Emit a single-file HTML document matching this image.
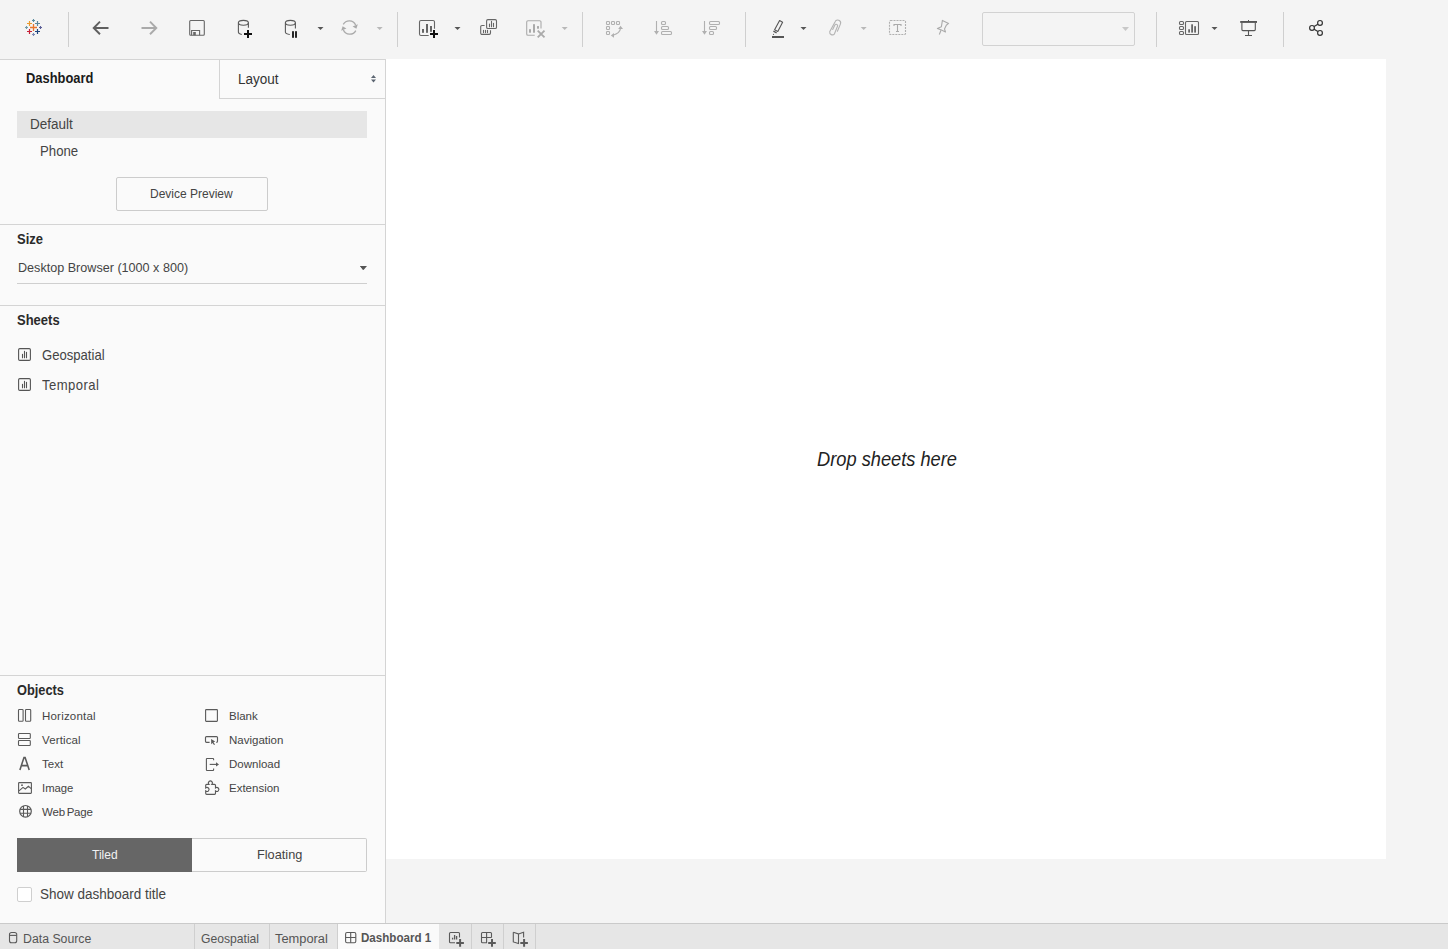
<!DOCTYPE html>
<html><head><meta charset="utf-8">
<style>
*{margin:0;padding:0;box-sizing:border-box}
html,body{width:1448px;height:949px;overflow:hidden}
body{position:relative;background:#f4f4f4;font-family:"Liberation Sans",sans-serif;color:#333}
.a{position:absolute}
.t{position:absolute;white-space:nowrap;line-height:1;transform-origin:0 0}
.sep{position:absolute;top:12px;width:1px;height:35px;background:#cfcfcf}
.dd{position:absolute;width:0;height:0;border-left:3px solid transparent;border-right:3px solid transparent;border-top:3px solid #555}
svg.i{position:absolute;overflow:visible}
</style></head><body>

<!-- TOOLBAR -->
<div id="toolbar" class="a" style="left:0;top:0;width:1448px;height:59px;background:#f4f4f4"></div>
<div class="sep" style="left:68px"></div>
<div class="sep" style="left:397px"></div>
<div class="sep" style="left:582px"></div>
<div class="sep" style="left:745px"></div>
<div class="sep" style="left:1156px"></div>
<div class="sep" style="left:1283px"></div>
<div class="a" style="left:982px;top:12px;width:153px;height:34px;border:1px solid #d2d2d2;border-radius:2px"></div>

<!-- CANVAS -->
<div class="a" style="left:386px;top:59px;width:1000px;height:800px;background:#fff"></div>
<div class="t" style="left:817px;top:450px;font-size:18.25px;font-style:italic;color:#222;transform:scaleY(1.07)">Drop sheets here</div>

<!-- SIDEBAR -->
<div class="a" style="left:0;top:59px;width:386px;height:865px;background:#fafafa;border-top:1px solid #d4d4d4;border-right:1px solid #d4d4d4"></div>
<div class="a" style="left:219px;top:59px;width:167px;height:40px;border-left:1px solid #d4d4d4;border-bottom:1px solid #d4d4d4;border-top:1px solid #d4d4d4;border-right:1px solid #d4d4d4"></div>
<div class="t" style="left:26px;top:72px;font-size:12.9px;font-weight:bold;color:#1a1a1a;transform:scaleY(1.11)">Dashboard</div>
<div class="t" style="left:238px;top:72px;font-size:13.5px;color:#333;transform:scaleY(1.11)">Layout</div>

<div class="a" style="left:17px;top:111px;width:350px;height:27px;background:#e6e6e6"></div>
<div class="t" style="left:30px;top:117px;font-size:13.5px;color:#444;transform:scaleY(1.11)">Default</div>
<div class="t" style="left:40px;top:144px;font-size:13.2px;color:#444;transform:scaleY(1.11)">Phone</div>
<div class="a" style="left:116px;top:177px;width:152px;height:34px;border:1px solid #cccccc;border-radius:2px"></div>
<div class="t" style="left:150px;top:188px;font-size:12px;color:#444">Device Preview</div>

<div class="a" style="left:0;top:224px;width:385px;height:1px;background:#d4d4d4"></div>
<div class="t" style="left:17px;top:232px;font-size:13px;font-weight:bold;color:#2b2b2b;transform:scaleY(1.11)">Size</div>
<div class="t" style="left:18px;top:262px;font-size:12.6px;color:#444">Desktop Browser (1000 x 800)</div>
<div class="dd" style="left:360px;top:266px;border-left-width:3.5px;border-right-width:3.5px;border-top-width:4px"></div>
<div class="a" style="left:17px;top:283px;width:350px;height:1px;background:#cfcfcf"></div>

<div class="a" style="left:0;top:305px;width:385px;height:1px;background:#d4d4d4"></div>
<div class="t" style="left:17px;top:313px;font-size:13px;font-weight:bold;color:#2b2b2b;transform:scaleY(1.11)">Sheets</div>
<div class="t" style="left:42px;top:348px;font-size:13.1px;color:#444;transform:scaleY(1.11)">Geospatial</div>
<div class="t" style="left:42px;top:378px;font-size:13.1px;color:#444;transform:scaleY(1.11);letter-spacing:0.45px">Temporal</div>

<div class="a" style="left:0;top:675px;width:385px;height:1px;background:#d4d4d4"></div>
<div class="t" style="left:17px;top:684px;font-size:12.8px;font-weight:bold;color:#2b2b2b;transform:scaleY(1.11)">Objects</div>
<div class="t" style="left:42px;top:711px;font-size:11.5px;color:#444;letter-spacing:0.2px">Horizontal</div>
<div class="t" style="left:42px;top:735px;font-size:11.5px;color:#444;letter-spacing:0.13px">Vertical</div>
<div class="t" style="left:42px;top:759px;font-size:11.5px;color:#444">Text</div>
<div class="t" style="left:42px;top:783px;font-size:11.3px;color:#444">Image</div>
<div class="t" style="left:42px;top:807px;font-size:11.5px;color:#444;word-spacing:-1.2px;letter-spacing:-0.2px">Web Page</div>
<div class="t" style="left:229px;top:711px;font-size:11.5px;color:#444">Blank</div>
<div class="t" style="left:229px;top:735px;font-size:11.5px;color:#444">Navigation</div>
<div class="t" style="left:229px;top:759px;font-size:11.5px;color:#444">Download</div>
<div class="t" style="left:229px;top:783px;font-size:11.5px;color:#444">Extension</div>

<div class="a" style="left:17px;top:838px;width:175px;height:34px;background:#666"></div>
<div class="t" style="left:92px;top:849px;font-size:12px;color:#f2f2f2">Tiled</div>
<div class="a" style="left:192px;top:838px;width:175px;height:34px;border:1px solid #cccccc;border-left:none;border-radius:0 2px 2px 0"></div>
<div class="t" style="left:257px;top:849px;font-size:12.75px;color:#444">Floating</div>
<div class="a" style="left:17px;top:887px;width:15px;height:15px;border:1px solid #cfcfcf;background:#fff;border-radius:2px"></div>
<div class="t" style="left:40px;top:887px;font-size:13.5px;color:#444;transform:scaleY(1.11)">Show dashboard title</div>

<!-- TAB BAR -->
<div class="a" style="left:0;top:923px;width:1448px;height:26px;background:#e6e6e6;border-top:1px solid #cacaca"></div>
<div class="t" style="left:23px;top:933px;font-size:12.3px;color:#555">Data Source</div>
<div class="a" style="left:194px;top:924px;width:1px;height:25px;background:#cfcfcf"></div>
<div class="t" style="left:201px;top:933px;font-size:12.15px;color:#555">Geospatial</div>
<div class="a" style="left:269px;top:924px;width:1px;height:25px;background:#cfcfcf"></div>
<div class="t" style="left:275px;top:933px;font-size:12.85px;color:#555">Temporal</div>
<div class="a" style="left:337px;top:924px;width:102px;height:25px;background:#fafafa;border-left:1px solid #cfcfcf"></div>
<div class="t" style="left:361px;top:931px;font-size:11.6px;font-weight:bold;color:#555;transform:scaleY(1.11)">Dashboard 1</div>
<div class="a" style="left:471px;top:924px;width:1px;height:25px;background:#cfcfcf"></div>
<div class="a" style="left:503px;top:924px;width:1px;height:25px;background:#cfcfcf"></div>
<div class="a" style="left:535px;top:924px;width:1px;height:25px;background:#cfcfcf"></div>

<!-- ICONS -->
<svg class="i" style="left:0;top:0" width="1448" height="949" viewBox="0 0 1448 949" fill="none">
<!-- tableau logo -->
<g stroke-linecap="butt">
<path d="M30 27.5h7M33.5 24v7" stroke="#e8762d" stroke-width="1.3"/>
<path d="M27 23.5h5M29.5 21v5" stroke="#eb9a2c" stroke-width="1.2"/>
<path d="M35 23.5h5M37.5 21v5" stroke="#5b879b" stroke-width="1.2"/>
<path d="M27 31.5h5M29.5 29v5" stroke="#c72037" stroke-width="1.2"/>
<path d="M35 31.5h5M37.5 29v5" stroke="#1f457e" stroke-width="1.2"/>
<path d="M32 20.5h3M33.5 19v3" stroke="#5b8da0" stroke-width="1.1"/>
<path d="M25 27.5h3M26.5 26v3" stroke="#709aa8" stroke-width="1.1"/>
<path d="M39 27.5h3M40.5 26v3" stroke="#5b5f97" stroke-width="1.1"/>
<path d="M32 34.5h3M33.5 33v3" stroke="#7b88b5" stroke-width="1.1"/>
</g>
<!-- back arrow -->
<path d="M108.5 28H94M100 21.6L93.7 28L100 34.2" stroke="#5f5f5f" stroke-width="1.9" stroke-linejoin="miter"/>
<!-- forward arrow -->
<path d="M141.5 28H156M150 21.6L156.3 28L150 34.2" stroke="#aaaaaa" stroke-width="1.9"/>
<!-- save -->
<rect x="189.7" y="20.5" width="14.6" height="14.8" rx="1" stroke="#666" stroke-width="1.1"/>
<path d="M191.6 35.3V30.5h8v4.8" stroke="#666" stroke-width="1.1"/>
<rect x="193.2" y="32" width="2.6" height="3.3" fill="#666"/>
<!-- db + -->
<ellipse cx="243.4" cy="22.8" rx="5" ry="2.4" stroke="#5a5a5a" stroke-width="1.1"/>
<path d="M238.4 22.8V32.2Q238.6 33.9 241.8 34.5M248.4 22.8V27.8" stroke="#5a5a5a" stroke-width="1.1"/>
<path d="M244 34h8M248 30v8" stroke="#111" stroke-width="2"/>
<!-- db pause -->
<ellipse cx="290.4" cy="22.8" rx="5" ry="2.4" stroke="#5a5a5a" stroke-width="1.1"/>
<path d="M285.4 22.8V32.2Q285.6 33.9 289.8 34.5M295.4 22.8V28.6" stroke="#5a5a5a" stroke-width="1.1"/>
<rect x="292.1" y="31.2" width="1.8" height="6.6" fill="#111"/>
<rect x="295.1" y="31.2" width="1.8" height="6.6" fill="#111"/>
<!-- dropdowns -->
<path d="M317.5 27h6l-3 3z" fill="#555"/>
<path d="M376.7 27h6l-3 3z" fill="#b8b8b8"/>
<path d="M454.5 27h6l-3 3z" fill="#555"/>
<path d="M561.7 27h6l-3 3z" fill="#b8b8b8"/>
<path d="M800.5 27h6l-3 3z" fill="#555"/>
<path d="M860.7 27h6l-3 3z" fill="#b8b8b8"/>
<path d="M1211.5 27h6l-3 3z" fill="#555"/>
<path d="M1122 27h7l-3.5 4z" fill="#c8c8c8"/>
<!-- refresh -->
<path d="M343.3 24.4A6.9 6.9 0 0 1 355.6 25" stroke="#aaa" stroke-width="1.3"/>
<path d="M357.8 24.2L356.4 28.8L352.6 26.6z" fill="#aaa"/>
<path d="M355.8 30.6A6.9 6.9 0 0 1 343.4 30" stroke="#aaa" stroke-width="1.3"/>
<path d="M341.2 30.8L342.6 26.3L346.4 28.4z" fill="#aaa"/>
<!-- new worksheet -->
<path d="M434.5 28.7V22a1.5 1.5 0 0 0-1.5-1.5H421a1.5 1.5 0 0 0-1.5 1.5v12a1.5 1.5 0 0 0 1.5 1.5h7.7" stroke="#666" stroke-width="1.1"/>
<rect x="422" y="29" width="2" height="3.8" fill="#666"/>
<rect x="426" y="24" width="2" height="8.8" fill="#666"/>
<rect x="430" y="26" width="2" height="5.8" fill="#666"/>
<path d="M430 34h8M434 30v8" stroke="#111" stroke-width="2"/>
<!-- duplicate -->
<rect x="486.6" y="19.6" width="9.9" height="8.9" rx="1.3" stroke="#666" stroke-width="1.1"/>
<path d="M489.5 24v2.7M491.5 21.3v5.4M493.5 23.2v3.5" stroke="#666" stroke-width="1.1" stroke-linecap="round"/>
<path d="M484.6 25.5H482a1.3 1.3 0 0 0-1.3 1.3v6.3a1.3 1.3 0 0 0 1.3 1.3h7.2a1.3 1.3 0 0 0 1.3-1.3V30.3" stroke="#666" stroke-width="1.1"/>
<path d="M483.5 30.3v2.3M485.5 30.3v2.3M487.5 30.3v2.3" stroke="#666" stroke-width="1.1" stroke-linecap="round"/>
<!-- clear sheet -->
<path d="M541 28.6V22a1.3 1.3 0 0 0-1.3-1.3H528a1.3 1.3 0 0 0-1.3 1.3v12a1.3 1.3 0 0 0 1.3 1.3h6.7" stroke="#aaa" stroke-width="1.1"/>
<rect x="529" y="29.2" width="2" height="3.5" fill="#aaa"/>
<rect x="533" y="24.2" width="2" height="8.5" fill="#aaa"/>
<rect x="537" y="26.1" width="2" height="2.6" fill="#aaa"/>
<path d="M537.7 30.6l6.8 6.8M544.5 30.6l-6.8 6.8" stroke="#aaa" stroke-width="1.8"/>
<!-- swap -->
<g stroke="#b0b0b0" stroke-width="1.1">
<rect x="606.5" y="21.5" width="3" height="3" rx="0.8"/>
<rect x="611.5" y="21.5" width="3" height="3" rx="0.8"/>
<rect x="616.5" y="21.5" width="3" height="3" rx="0.8"/>
<rect x="606.5" y="26.5" width="3" height="3" rx="0.8"/>
<rect x="606.5" y="31.5" width="3" height="3" rx="0.8"/>
<path d="M613 35.3Q619.8 33.5 620.6 28.2"/>
</g>
<path d="M620.5 25.8L623 29L618.2 29z" fill="#b0b0b0"/>
<path d="M610.8 35.4L614 33L614 37.8z" fill="#b0b0b0"/>
<!-- sort asc -->
<g stroke="#b0b0b0" stroke-width="1.1">
<path d="M656.5 21V31.5"/>
<rect x="661.5" y="21.5" width="4" height="3" rx="1"/>
<rect x="661.5" y="26.5" width="7" height="3" rx="1"/>
<rect x="661.5" y="31.5" width="10" height="3" rx="1"/>
<path d="M704.5 21V31.5"/>
<rect x="709.5" y="21.5" width="10" height="3" rx="1"/>
<rect x="709.5" y="26.5" width="7" height="3" rx="1"/>
<rect x="709.5" y="31.5" width="4" height="3" rx="1"/>
</g>
<path d="M654 31h5l-2.5 3.8z" fill="#b0b0b0"/>
<path d="M702 31h5l-2.5 3.8z" fill="#b0b0b0"/>
<!-- highlighter -->
<path d="M779.6 20.6L782.6 22.2L777.8 31.4L774.6 29.8z" stroke="#555" stroke-width="1.1" stroke-linejoin="round"/>
<path d="M773.4 31.2L776.6 32.8" stroke="#555" stroke-width="1.3"/>
<circle cx="773.5" cy="34.3" r="0.6" fill="#555"/>
<rect x="772" y="36" width="12" height="2" fill="#555"/>
<!-- paperclip -->
<path d="M837.4 31.2L840.4 24.1A2.9 2.9 0 0 0 835 21.9L829.7 31.7A2.7 2.7 0 0 0 834.5 33.8L837.5 26.3A1.4 1.4 0 0 0 834.9 25.1L832.7 29.4" stroke="#b3b3b3" stroke-width="1.1" stroke-linecap="round"/>
<!-- text box -->
<rect x="889.5" y="20.5" width="16" height="14" rx="1" stroke="#b0b0b0" stroke-width="1.1" stroke-dasharray="2 1"/>
<path d="M894 26V24.5h7V26M897.5 24.5V31.5M896 31.5h3" stroke="#aaa" stroke-width="1.1"/>
<!-- pin -->
<path d="M942.4 20.4L948.6 23.4L946.3 25.2L944.5 29L945.5 32L941.4 30.1L937.4 28.5L941.4 26.7z" stroke="#aaa" stroke-width="1.1" stroke-linejoin="round"/>
<path d="M941 30.2L939.3 34.5" stroke="#aaa" stroke-width="1.1"/>
<!-- show cards -->
<g stroke="#666" stroke-width="1.1">
<rect x="1179.5" y="21.5" width="4" height="3" rx="1"/>
<rect x="1179.5" y="26.5" width="4" height="3" rx="1"/>
<rect x="1179.5" y="31.5" width="4" height="3" rx="1"/>
<rect x="1185.5" y="21.5" width="13" height="13" rx="1"/>
</g>
<rect x="1188.2" y="29.3" width="1.8" height="3.3" fill="#666"/>
<rect x="1191.2" y="24.3" width="1.8" height="8.3" fill="#666"/>
<rect x="1194.2" y="26.2" width="1.8" height="6.4" fill="#666"/>
<!-- presentation -->
<rect x="1240.2" y="21" width="16.8" height="1.9" fill="#555"/>
<path d="M1248.5 20V21" stroke="#555" stroke-width="1"/>
<path d="M1241.9 22.8V29.6a1 1 0 0 0 1 1H1254.3a1 1 0 0 0 1-1V22.8M1248.5 30.6V35.5M1245 35.5H1252" stroke="#555" stroke-width="1.1"/>
<!-- share -->
<g stroke="#333" stroke-width="1.2">
<circle cx="1320" cy="22.9" r="2.4"/>
<circle cx="1312" cy="27.9" r="2.4"/>
<circle cx="1320" cy="32.9" r="2.4"/>
<path d="M1314.1 26.6L1317.9 24.2M1314.1 29.2L1317.9 31.6"/>
</g>
<!-- layout up/down -->
<path d="M371 78h5l-2.5-3z" fill="#5b6571"/>
<path d="M371 79.5h5l-2.5 3z" fill="#5b6571"/>
<!-- size dropdown -->
<path d="M360 266h7l-3.5 4z" fill="#555"/>
<!-- sheet icons -->
<g stroke="#555" stroke-width="1.1">
<rect x="18.6" y="348.6" width="11.8" height="11.8" rx="1.2"/>
<path d="M22.5 354.3v3.5M24.5 351.3v6.5M26.5 352.3v5.5" stroke-linecap="round"/>
<rect x="18.6" y="378.6" width="11.8" height="11.8" rx="1.2"/>
<path d="M22.5 384.3v3.5M24.5 381.3v6.5M26.5 382.3v5.5" stroke-linecap="round"/>
</g>
<!-- objects icons -->
<g stroke="#5a5a5a" stroke-width="1.1">
<rect x="18.5" y="709.5" width="4.6" height="11.8" rx="0.8"/>
<rect x="25.5" y="709.5" width="5.2" height="11.8" rx="0.8"/>
<rect x="18.5" y="733.5" width="11.8" height="5" rx="0.8"/>
<rect x="18.5" y="740.5" width="11.8" height="5" rx="0.8"/>
<path d="M19.9 769.9L24 757.4H25.1L29.2 769.9M21.3 765.6H27.8" stroke-width="1.55"/>
<rect x="18.6" y="782.6" width="12.8" height="10.8" rx="0.6"/>
<path d="M19 790.8L23 787.4L25.3 789L28.4 786.3L31.2 788.6"/>
<circle cx="25.5" cy="811.3" r="5.8" stroke-width="1.2"/>
<path d="M23.5 805.9V816.7M27.5 805.9V816.7M20.1 809.4H30.9M20.1 813.3H30.9" stroke-width="1.1"/>
<rect x="205.6" y="709.6" width="11.8" height="11.8" rx="0.6"/>
<path d="M209.6 742.3H206.5a1 1 0 0 1-1-1V737.6a1 1 0 0 1 1-1H216.5a1 1 0 0 1 1 1v3.7a1 1 0 0 1-1 1H216.3" stroke-width="1.15"/>
<path d="M213.6 760.2V759.1a0.6 0.6 0 0 0-0.6-0.6H207a0.6 0.6 0 0 0-0.6 0.6v10.8a0.6 0.6 0 0 0 0.6 0.6h6a0.6 0.6 0 0 0 0.6-0.6V768.5"/>
<path d="M209.7 764.4H216.5"/>
<path d="M208.9 784.3A2 2 0 1 1 211.9 784.3H214.5a1 1 0 0 1 1 1V787.9A2 2 0 1 1 215.5 790.9V793.3a1 1 0 0 1-1 1H206.7a1 1 0 0 1-1-1V790.9A2 2 0 1 0 205.7 787.9V785.3a1 1 0 0 1 1-1z" stroke-width="1.15"/>
</g>
<path d="M211.1 739L215.2 741.6L213.5 742.2L215 744.4L214 745.1L212.6 743L211.2 744.2z" fill="#5a5a5a"/>
<path d="M216 762.2L219 764.4L216 766.6z" fill="#5a5a5a"/>
<circle cx="22" cy="785.2" r="0.9" fill="#5a5a5a"/>
<!-- tab bar icons -->
<g stroke="#5a5a5a" stroke-width="1.1">
<path d="M9.5 934.3a2 1.6 0 0 1 2-1.8h3.2a2 1.6 0 0 1 2 1.8v6.4a2 2 0 0 1-2 2h-3.2a2 2 0 0 1-2-2z"/>
<path d="M9.5 935.4H16.7"/>
<rect x="345.6" y="932.5" width="10.2" height="10.2" rx="1.4"/>
<path d="M350.7 932.5v10.2M345.6 937.5H355.8"/>
<path d="M459.5 937.5V933.5a1 1 0 0 0-1-1H450.5a1 1 0 0 0-1 1v8.2a1 1 0 0 0 1 1H455"/>
<path d="M452.6 937.8v1.8M454.6 935v4.6M456.6 936v3.6" stroke-width="1.3"/>
<path d="M491.5 937.5V933.5a1 1 0 0 0-1-1H482.5a1 1 0 0 0-1 1v8.2a1 1 0 0 0 1 1H487M481.5 937.5H491.5M486.6 932.5V942.7"/>
<path d="M513.3 932.2V941.9L518.5 943.6V933.9L513.3 932.2M518.5 933.9L523.6 932.2V937.5"/>
</g>
<path d="M456.3 942.9h7.6M460.1 939.1v7.6M488.2 942.9h7.6M492 939.1v7.6M520.3 942.9h7.6M524.1 939.1v7.6" stroke="#5a5a5a" stroke-width="2"/>
</svg>

</body></html>
